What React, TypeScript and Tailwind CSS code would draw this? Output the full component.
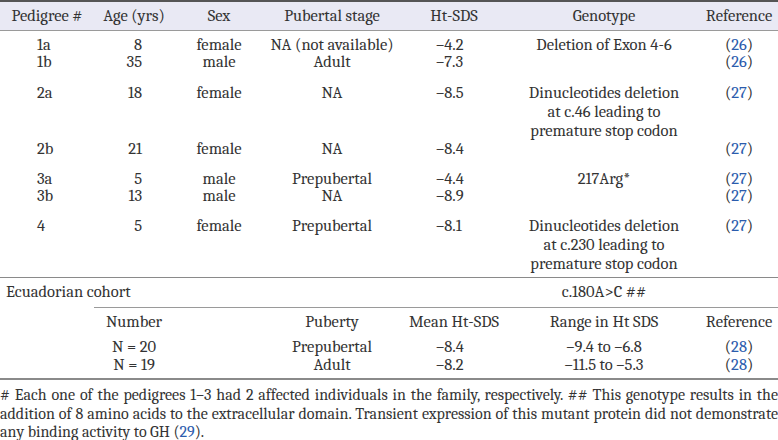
const cols = 'grid grid-cols-[94px_80px_90px_136px_108px_192px_78px]';

type Row = {
  id: string;
  age: string;
  sex: string;
  stage: string;
  sds: string;
  genotype?: string[];
  ref: string;
};

const groups: { mt: string; rows: Row[] }[] = [
  {
    mt: 'mt-[5px]',
    rows: [
      { id: '1a', age: '8', sex: 'female', stage: 'NA (not available)', sds: '–4.2', genotype: ['Deletion of Exon 4-6'], ref: '26' },
      { id: '1b', age: '35', sex: 'male', stage: 'Adult', sds: '–7.3', ref: '26' },
    ],
  },
  {
    mt: 'mt-[13px]',
    rows: [
      {
        id: '2a', age: '18', sex: 'female', stage: 'NA', sds: '–8.5',
        genotype: ['Dinucleotides deletion', 'at c.46 leading to', 'premature stop codon'], ref: '27',
      },
      { id: '2b', age: '21', sex: 'female', stage: 'NA', sds: '–8.4', ref: '27' },
    ],
  },
  {
    mt: 'mt-[13px]',
    rows: [
      { id: '3a', age: '5', sex: 'male', stage: 'Prepubertal', sds: '–4.4', genotype: ['217Arg*'], ref: '27' },
      { id: '3b', age: '13', sex: 'male', stage: 'NA', sds: '–8.9', ref: '27' },
    ],
  },
  {
    mt: 'mt-[12px]',
    rows: [
      {
        id: '4', age: '5', sex: 'female', stage: 'Prepubertal', sds: '–8.1',
        genotype: ['Dinucleotides deletion', 'at c.230 leading to', 'premature stop codon'], ref: '27',
      },
    ],
  },
];

const cohort = [
  { n: 'N = 20', puberty: 'Prepubertal', mean: '–8.4', range: '–9.4 to –6.8', ref: '28' },
  { n: 'N = 19', puberty: 'Adult', mean: '–8.2', range: '–11.5 to –5.3', ref: '28' },
];

const Ref = ({ n }: { n: string }) => (
  <span>
    (<span className="text-[#2b5cad]">{n}</span>)
  </span>
);

const DataRow = ({ row }: { row: Row }) => {
  const multi = (row.genotype?.length ?? 0) > 1;
  const lh = multi ? 'leading-[19px]' : 'leading-[17px]';
  return (
    <div className={`${cols} ${lh}`}>
      <div className="pl-[37px]">{row.id}</div>
      <div className="pr-[32px] text-right">{row.age}</div>
      <div className="text-center">{row.sex}</div>
      <div className="text-center">{row.stage}</div>
      <div className="pl-[36px]">{row.sds}</div>
      <div className="text-center">
        {row.genotype?.map((g) => (
          <div key={g}>{g}</div>
        ))}
      </div>
      <div className="text-center">
        <Ref n={row.ref} />
      </div>
    </div>
  );
};

const App = () => {
  return (
    <div className="w-[778px] h-[440px] bg-white text-[#333] text-[16.5px] font-serif overflow-hidden">
      {/* header */}
      <div className={`${cols} h-[31px] items-center bg-[#e9e9f4] border-t-2 border-t-[#555] border-b border-b-[#9a9a9a]`}>
        <div className="text-center">Pedigree #</div>
        <div className="text-center">Age (yrs)</div>
        <div className="text-center">Sex</div>
        <div className="text-center">Pubertal stage</div>
        <div className="text-center">Ht-SDS</div>
        <div className="text-center">Genotype</div>
        <div className="text-center">Reference</div>
      </div>

      {/* pedigrees */}
      <div className="pb-[4px] border-b border-[#8a8a8a]">
        {groups.map((g, i) => (
          <div key={i} className={g.mt}>
            {g.rows.map((r) => (
              <DataRow key={r.id} row={r} />
            ))}
          </div>
        ))}
      </div>

      {/* Ecuadorian cohort */}
      <div className={`${cols} h-[29px] items-center`}>
        <div className="col-span-5 pl-[6px]">Ecuadorian cohort</div>
        <div className="text-center">c.180A&gt;C ##</div>
      </div>
      <div className={cols}>
        <div className="col-start-2 col-span-6 border-t border-[#9a9a9a]" />
      </div>
      <div className={`${cols} h-[28px] items-center`}>
        <div />
        <div className="text-center">Number</div>
        <div />
        <div className="text-center">Puberty</div>
        <div className="text-center">Mean Ht-SDS</div>
        <div className="text-center">Range in Ht SDS</div>
        <div className="text-center">Reference</div>
      </div>
      <div className="pt-[2px] pb-[4px] border-b-2 border-[#8a8a8a]">
        {cohort.map((c) => (
          <div key={c.n} className={`${cols} leading-[18px]`}>
            <div />
            <div className="text-center">{c.n}</div>
            <div />
            <div className="text-center">{c.puberty}</div>
            <div className="pl-[36px]">{c.mean}</div>
            <div className="text-center">{c.range}</div>
            <div className="text-center">
              <Ref n={c.ref} />
            </div>
          </div>
        ))}
      </div>

      {/* footnote */}
      <div className="pt-[6px] leading-[18.5px] text-[16px]">
        <div className="text-justify [text-align-last:justify]">
          # Each one of the pedigrees 1–3 had 2 affected individuals in the family, respectively. ## This genotype results in the
        </div>
        <div className="text-justify [text-align-last:justify]">
          addition of 8 amino acids to the extracellular domain. Transient expression of this mutant protein did not demonstrate
        </div>
        <div>
          any binding activity to GH (<span className="text-[#2b5cad]">29</span>).
        </div>
      </div>
    </div>
  );
};

export default App;
